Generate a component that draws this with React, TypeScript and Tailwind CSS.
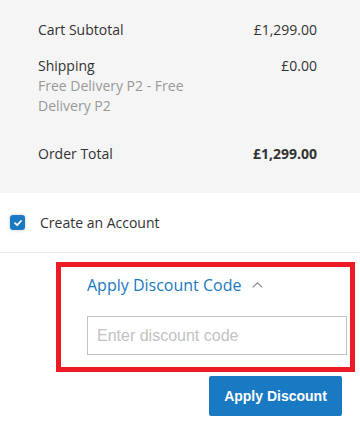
import React from "react";

export default function App() {
  return (
    <div className="w-[360px] h-[434px] bg-white overflow-hidden" style={{ fontFamily: '"Open Sans", sans-serif' }}>
      <div className="bg-[#f5f5f5] pt-[20px] pb-[29px] pl-[38px] pr-[43px] text-[14px] leading-5 text-[#333]">
        <div className="flex justify-between">
          <span>Cart Subtotal</span>
          <span>£1,299.00</span>
        </div>
        <div className="flex justify-between mt-[16px]">
          <div className="w-[160px]">
            <div>Shipping</div>
            <div className="text-[#999]">Free Delivery P2 - Free Delivery P2</div>
          </div>
          <span>£0.00</span>
        </div>
        <div className="flex justify-between mt-[28px]">
          <span>Order Total</span>
          <span className="font-bold">£1,299.00</span>
        </div>
      </div>
      <div className="h-[60px] flex items-center pl-[10px] border-b border-[#ececec]">
        <span className="w-[15px] h-[15px] rounded-[3px] bg-[#1979c3] flex items-center justify-center shadow-[0_0_3px_1px_rgba(0,0,0,0.12)]">
          <svg width="10" height="10" viewBox="0 0 10 10" fill="none">
            <path d="M2 5.2 L4.2 7.2 L8 3" stroke="white" strokeWidth="1.8" strokeLinecap="round" strokeLinejoin="round" />
          </svg>
        </span>
        <span className="ml-[15px] text-[14px] text-[#333] leading-5">Create an Account</span>
      </div>
      <div className="ml-[56px] mt-[9px] w-[299px] border-[5px] border-[#ed1c24] pl-[26px] pr-[3px] pt-[6px] pb-[12px]">
        <div className="flex items-center h-[24px] text-[16px] text-[#1979c3]">
          <span>Apply Discount Code</span>
          <svg className="ml-[11px]" width="11" height="6" viewBox="0 0 11 6" fill="none">
            <path d="M0.7 5.4 L5.5 0.8 L10.3 5.4" stroke="#8a8a8a" strokeWidth="1.2" />
          </svg>
        </div>
        <input
          className="mt-[19px] w-[260px] h-[39px] border border-[#c2c2c2] px-[9px] text-[16px] outline-none placeholder:text-[#c2c2c2]"
          style={{ fontFamily: '"Liberation Sans", Arial, sans-serif' }}
          placeholder="Enter discount code"
        />
      </div>
      <div className="flex justify-end pr-[18px] mt-[4px]">
        <button
          className="w-[133px] h-[40px] bg-[#1979c3] text-white font-bold text-[14px] rounded-[2px]"
          style={{ fontFamily: '"Liberation Sans", Arial, sans-serif' }}
        >
          Apply Discount
        </button>
      </div>
    </div>
  );
}
